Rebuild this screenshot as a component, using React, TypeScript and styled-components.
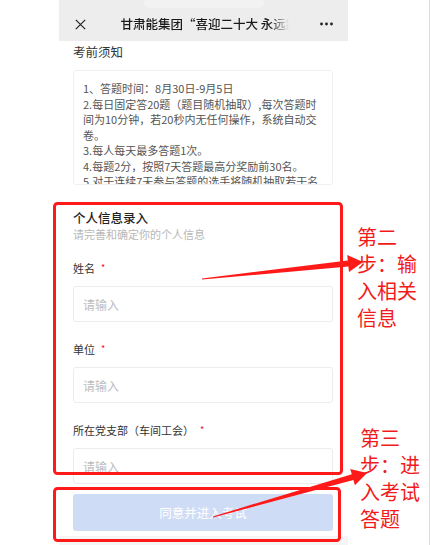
import React from 'react';
import styled, { createGlobalStyle } from 'styled-components';

const GlobalStyle = createGlobalStyle`
  html, body {
    margin: 0;
    padding: 0;
    background: #fff;
  }
  body {
    font-family: 'Noto Sans CJK SC', 'Noto Sans', sans-serif;
  }
`;

const Root = styled.div`
  position: relative;
  width: 429px;
  height: 545px;
  border-right: 1px solid #dcdcdc;
  display: flex;
  overflow: hidden;
  background: #fff;
`;

const Phone = styled.div`
  margin-left: 59px;
  width: 289px;
  height: 100%;
  display: flex;
  flex-direction: column;
`;

const Header = styled.div`
  position: relative;
  flex: none;
  height: 41px;
  box-sizing: border-box;
  padding: 7px 14px 0 16px;
  background: #ededed;
  display: grid;
  grid-template-columns: 24px 1fr 24px;
  align-items: center;

  &::before {
    content: '';
    position: absolute;
    top: 0;
    left: 84px;
    width: 122px;
    height: 8px;
    border-radius: 0 0 10px 10px;
    background: #f2f2f2;
  }
`;

const HeaderTitle = styled.div`
  justify-self: center;
  width: 168px;
  overflow: hidden;
  white-space: nowrap;
  font-size: 12.5px;
  font-weight: 500;
  color: #1a1a1a;
  line-height: 34px;
  -webkit-mask-image: linear-gradient(to right, #000 88%, transparent 100%);
  mask-image: linear-gradient(to right, #000 88%, transparent 100%);
`;

const IconSlot = styled.div<{ $end?: boolean }>`
  display: flex;
  justify-content: ${({ $end }) => ($end ? 'flex-end' : 'flex-start')};
  align-items: center;
  height: 34px;
`;

const Content = styled.div`
  flex: none;
  padding: 0 15px 0 14px;
`;

const SectionTitle = styled.div`
  margin-top: 2px;
  font-size: 12.5px;
  line-height: 18px;
  color: #333;
`;

const NoticeCard = styled.div`
  margin-top: 9px;
  height: 115px;
  box-sizing: border-box;
  padding: 10px 9px;
  border: 1px solid #f0f0f0;
  border-radius: 3px;
  overflow: hidden;
  font-size: 11px;
  line-height: 15.5px;
  color: #555;
`;

const FormTitle = styled.div`
  margin-top: 24px;
  font-size: 12.5px;
  font-weight: 500;
  line-height: 17px;
  color: #222;
`;

const FormHint = styled.div`
  font-size: 11px;
  line-height: 16px;
  color: #b8b8b8;
`;

const Field = styled.div<{ $first?: boolean }>`
  margin-top: ${({ $first }) => ($first ? '18px' : '19px')};
  display: flex;
  flex-direction: column;
  gap: 10px;
`;

const Label = styled.div`
  font-size: 11px;
  line-height: 16px;
  color: #333;
`;

const Required = styled.span`
  margin-left: 6px;
  font-size: 9px;
  vertical-align: 2px;
  color: #ee0a24;
`;

const Input = styled.input`
  display: block;
  width: 100%;
  height: 36px;
  box-sizing: border-box;
  padding: 0 9px;
  border: 1px solid #ececec;
  border-radius: 3px;
  outline: none;
  font-family: inherit;
  font-size: 12px;
  color: #333;
  background: #fff;

  &::placeholder {
    color: #bdbdbd;
  }
`;

const ButtonBar = styled.div`
  flex: none;
  padding: 10px 15px 5px 14px;
  background: #fff;
`;

const SubmitButton = styled.button`
  display: block;
  width: 100%;
  height: 37px;
  border: none;
  border-radius: 3px;
  background: #cfdcf5;
  color: #fff;
  font-family: inherit;
  font-size: 12.5px;
`;

const BottomFill = styled.div`
  flex: 1;
  background: #f5f5f5;
`;

const Overlay = styled.svg`
  position: absolute;
  inset: 0;
  pointer-events: none;
`;

const Callout = styled.div<{ $top: number; $left: number }>`
  position: absolute;
  top: ${({ $top }) => $top}px;
  left: ${({ $left }) => $left}px;
  width: 64px;
  font-size: 20px;
  line-height: 27px;
  color: #f21b1b;
`;

const arrowPoints = (x1: number, y1: number, x2: number, y2: number) => {
  const len = Math.hypot(x2 - x1, y2 - y1);
  const ux = (x2 - x1) / len;
  const uy = (y2 - y1) / len;
  const nx = -uy;
  const ny = ux;
  const headL = 15;
  const bx = x2 - ux * headL;
  const by = y2 - uy * headL;
  const pt = (x: number, y: number, w: number) => `${(x + nx * w).toFixed(1)},${(y + ny * w).toFixed(1)}`;
  return [
    pt(x1, y1, 0.5),
    pt(bx, by, 3),
    pt(bx, by, 8.5),
    `${x2},${y2}`,
    pt(bx, by, -8.5),
    pt(bx, by, -3),
    pt(x1, y1, -0.5),
  ].join(' ');
};

const notices = [
  '1、答题时间：8月30日-9月5日',
  '2.每日固定答20题（题目随机抽取）,每次答题时间为10分钟，若20秒内无任何操作，系统自动交卷。',
  '3.每人每天最多答题1次。',
  '4.每题2分，按照7天答题最高分奖励前30名。',
  '5.对于连续7天参与答题的选手将随机抽取若干名幸运奖。',
];

const fields = ['姓名', '单位', '所在党支部（车间工会）'];

export default function App() {
  return (
    <>
      <GlobalStyle />
      <Root>
        <Phone>
          <Header>
            <IconSlot>
              <svg width="11" height="11" viewBox="0 0 11 11">
                <path d="M0.8 0.8L10.2 10.2M10.2 0.8L0.8 10.2" stroke="#222" strokeWidth="1.2" fill="none" />
              </svg>
            </IconSlot>
            <HeaderTitle>甘肃能集团“喜迎二十大 永远跟党走”知识竞赛</HeaderTitle>
            <IconSlot $end>
              <svg width="14" height="4" viewBox="0 0 14 4">
                <circle cx="1.5" cy="2" r="1.4" fill="#222" />
                <circle cx="6.5" cy="2" r="1.4" fill="#222" />
                <circle cx="11.5" cy="2" r="1.4" fill="#222" />
              </svg>
            </IconSlot>
          </Header>
          <Content>
            <SectionTitle>考前须知</SectionTitle>
            <NoticeCard>
              {notices.map((n) => (
                <div key={n}>{n}</div>
              ))}
            </NoticeCard>
            <FormTitle>个人信息录入</FormTitle>
            <FormHint>请完善和确定你的个人信息</FormHint>
            {fields.map((f, i) => (
              <Field key={f} $first={i === 0}>
                <Label>
                  {f}
                  <Required>*</Required>
                </Label>
                <Input placeholder="请输入" />
              </Field>
            ))}
          </Content>
          <ButtonBar>
            <SubmitButton>同意并进入考试</SubmitButton>
          </ButtonBar>
          <BottomFill />
        </Phone>
        <Overlay width="430" height="545" viewBox="0 0 430 545">
          <rect x="54.5" y="203.5" width="287" height="270" rx="3" fill="none" stroke="#ff1a1a" strokeWidth="3" />
          <rect x="54.5" y="488.5" width="285" height="52" rx="3" fill="none" stroke="#ff1a1a" strokeWidth="3" />
          <polygon points={arrowPoints(202, 279, 363, 262)} fill="#ff1a1a" />
          <polygon points={arrowPoints(213, 517, 367, 473)} fill="#ff1a1a" />
        </Overlay>
        <Callout $top={223} $left={357}>
          第二
          <br />
          步：输入相关信息
        </Callout>
        <Callout $top={424} $left={360}>
          第三
          <br />
          步：进入考试答题
        </Callout>
      </Root>
    </>
  );
}
